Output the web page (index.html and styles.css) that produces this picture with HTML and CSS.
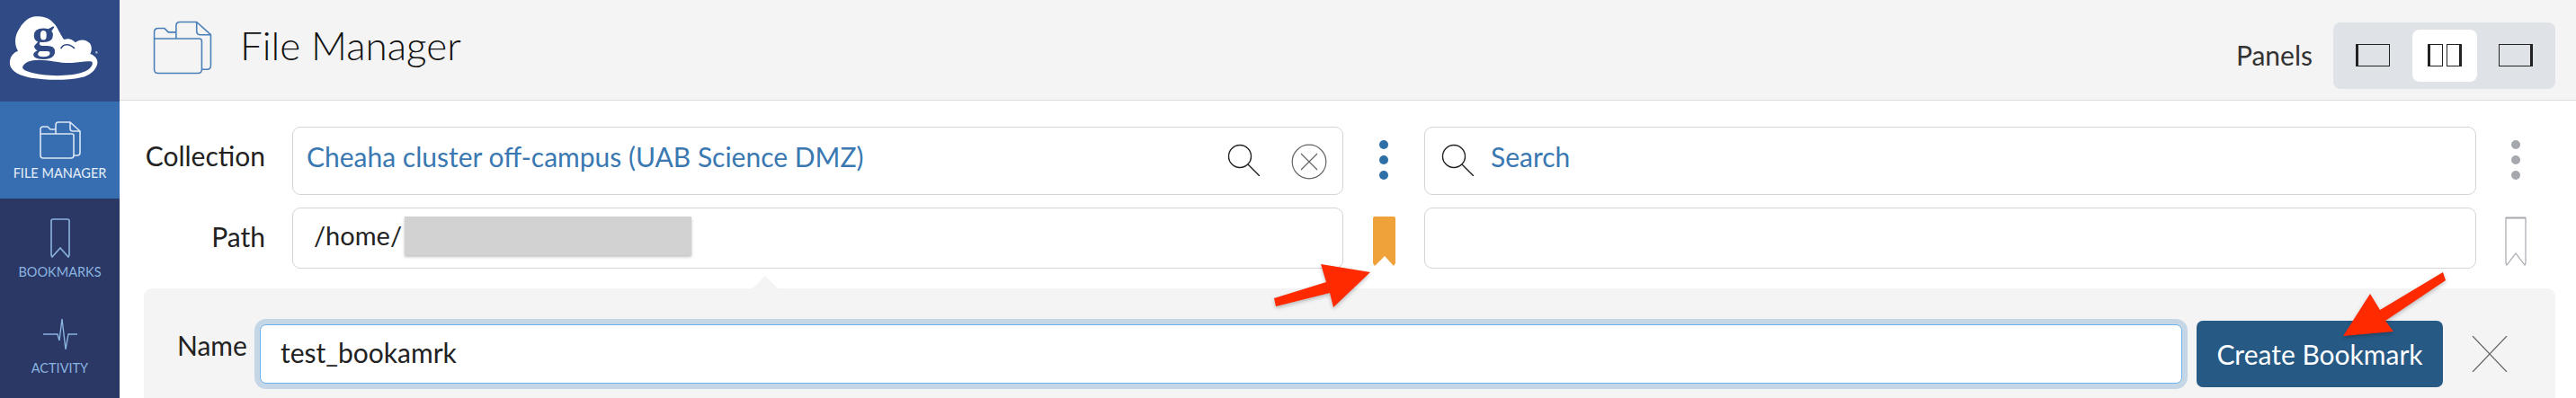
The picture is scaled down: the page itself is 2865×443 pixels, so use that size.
FILE: index.html
```html
<!DOCTYPE html>
<html lang="en">
<head>
    <meta charset="UTF-8">
    <title>File Manager</title>
    <link rel="stylesheet" href="styles.css">
</head>
<body>
    <nav class="sidebar">
        <div class="logo">
            <svg width="115" height="90" viewBox="0 0 345 270">
                <path fill="#fff" d="M18 175C20 155 32 145 45 140C33 120 32 90 50 65C65 40 85 25 105 25C135 22 165 35 182 75C190 88 195 100 200 102C215 95 232 105 236 112C250 100 272 100 285 115C292 125 292 140 286 150C302 155 312 168 310 182C305 205 285 222 255 229C220 237 170 238 130 235C95 232 55 227 32 208C22 198 16 188 18 175Z"/>
                <path fill="#2f4a85" d="M60 195C65 178 85 170 115 170C150 170 190 182 225 180C250 179 275 172 292 176C298 186 285 203 262 211C225 224 165 225 125 219C95 215 62 208 60 195Z"/>
                <path fill="none" stroke="#2f4a85" stroke-width="5" d="M188 132C196 118 214 112 234 132"/>
                <circle cx="307" cy="145" r="4" fill="#9fb0cf"/>
                <text class="logo-g" x="92" y="136">g</text>
            </svg>
        </div>
        <a class="nav-item active" href="#">
            <svg width="46" height="42" viewBox="0 0 46 42" fill="none" stroke="#dbe6f4" stroke-width="1.6">
                <path d="M1 14V9Q1 6 4 6H9L12 9H18"/>
                <path d="M1 14H36Q38 14 38 16V38Q38 41 35 41H4Q1 41 1 38Z"/>
                <path d="M18 14V4Q18 1 21 1H34L45 11V35Q45 38 42 38H38M34 1V8Q34 11 37 11H45"/>
            </svg>
            <span>FILE MANAGER</span>
        </a>
        <a class="nav-item bookmarks" href="#">
            <svg width="22" height="44" viewBox="0 0 22 44" fill="none" stroke="#8ab4e0" stroke-width="1.6">
                <path d="M1 3Q1 1 3 1H19Q21 1 21 3V41L20 43L11 33L2 43L1 41Z"/>
            </svg>
            <span>BOOKMARKS</span>
        </a>
        <a class="nav-item activity" href="#">
            <svg width="38" height="36" viewBox="0 0 38 36" fill="none" stroke="#8ab4e0" stroke-width="1.4">
                <path d="M0 18H16L18 25L21 1L25 35L28 18H38"/>
            </svg>
            <span>ACTIVITY</span>
        </a>
    </nav>

    <main class="main">
        <header class="topbar">
            <svg class="title-icon" width="68" height="60" viewBox="0 0 46 42" fill="none" stroke="#4a7fb8" stroke-width="1.1">
                <path d="M1 14V9Q1 6 4 6H9L12 9H18"/>
                <path d="M1 14H36Q38 14 38 16V38Q38 41 35 41H4Q1 41 1 38Z"/>
                <path d="M18 14V4Q18 1 21 1H34L45 11V35Q45 38 42 38H38M34 1V8Q34 11 37 11H45"/>
            </svg>
            <h1>File Manager</h1>
            <span class="panels-label">Panels</span>
            <div class="panels">
                <div class="panel-btn">
                    <svg width="38" height="25" viewBox="0 0 38 25" fill="none" stroke="#222">
                        <rect x="0.5" y="0.5" width="37" height="24"/>
                        <path stroke-width="3" d="M1.5 0V25"/>
                    </svg>
                </div>
                <div class="panel-btn selected">
                    <svg width="38" height="25" viewBox="0 0 38 25" fill="none" stroke="#222">
                        <rect x="0.5" y="0.5" width="16" height="24"/>
                        <rect x="21.5" y="0.5" width="16" height="24"/>
                        <path stroke-width="3" d="M1.5 0V25M36.5 0V25"/>
                    </svg>
                </div>
                <div class="panel-btn">
                    <svg width="38" height="25" viewBox="0 0 38 25" fill="none" stroke="#222">
                        <rect x="0.5" y="0.5" width="37" height="24"/>
                        <path stroke-width="3" d="M36.5 0V25"/>
                    </svg>
                </div>
            </div>
        </header>

        <section class="fields">
            <label class="field-label">Collection</label>
            <div class="box link">
                <span class="grow">Cheaha cluster off-campus (UAB Science DMZ)</span>
                <svg class="search-icon" width="36" height="36" viewBox="0 0 36 36" fill="none" stroke="#222" stroke-width="1.4">
                    <circle cx="14" cy="14" r="12.5"/>
                    <path d="M23 23L36 36"/>
                </svg>
                <svg class="clear-icon" width="40" height="40" viewBox="0 0 40 40" fill="none" stroke="#666" stroke-width="1.2">
                    <circle cx="20" cy="20" r="18.8"/>
                    <path d="M11 11L29 29M29 11L11 29"/>
                </svg>
            </div>
            <div class="side">
                <div class="dots"><i></i><i></i><i></i></div>
            </div>
            <div class="box link search-box">
                <svg class="search-icon" width="36" height="36" viewBox="0 0 36 36" fill="none" stroke="#222" stroke-width="1.4">
                    <circle cx="14" cy="14" r="12.5"/>
                    <path d="M23 23L36 36"/>
                </svg>
                <span class="grow">Search</span>
            </div>
            <div class="side">
                <div class="dots grey"><i></i><i></i><i></i></div>
            </div>

            <label class="field-label">Path</label>
            <div class="box path-box">
                <span>/home/</span><span class="redacted"></span>
            </div>
            <div class="side">
                <svg width="25" height="55" viewBox="0 0 25 55"><path fill="#f0a23a" d="M0 2Q0 0 2 0H23Q25 0 25 2V52L23 55L13 44L2 55L0 52Z"/></svg>
            </div>
            <div class="box"></div>
            <div class="side">
                <svg width="24" height="55" viewBox="0 0 24 55" fill="#fff" stroke="#a5a8ad" stroke-width="1.2"><path d="M1 1.5H23V52L22 54L12 41L2 54L1 52Z"/><path stroke-width="2" d="M1 1.5H23"/></svg>
            </div>
        </section>

        <section class="bookmark-panel">
            <label class="name-label">Name</label>
            <div class="name-input">test_bookamrk</div>
            <button class="create-btn">Create Bookmark</button>
            <svg class="close-icon" width="40" height="40" viewBox="0 0 40 40" fill="none" stroke="#666" stroke-width="1.2">
                <path d="M1 0L39 40M39 0L1 40"/>
            </svg>
        </section>
    </main>

    <svg class="arrows" width="2865" height="443" viewBox="0 0 2865 443">
        <path fill="#ff2a00" d="M1524 303L1469 294L1475 314L1417 332L1419 341L1479 326L1483 342Z"/>
        <path fill="#ff2a00" d="M2606 374L2662 369L2653 357L2720 312L2717 303L2647 345L2636 327Z"/>
    </svg>
</body>
</html>
```

FILE: styles.css
```css
* {
    box-sizing: border-box;
}

body {
    margin: 0;
    height: 443px;
    overflow: hidden;
    display: flex;
    font-family: Lato, "Open Sans", sans-serif;
    color: #222;
    background-color: #fff;
}

.sidebar {
    width: 133px;
    flex-shrink: 0;
    background-color: #2b3764;
}

.logo {
    height: 113px;
    padding: 10px 0 0 5px;
    background-color: #2f4a85;
}

.logo-g {
    font-family: "Liberation Serif", serif;
    font-weight: bold;
    font-size: 155px;
    fill: #2f4a85;
}

.nav-item {
    height: 108px;
    display: flex;
    flex-direction: column;
    align-items: center;
    padding-top: 22px;
    color: #8ab4e0;
    font-size: 14.5px;
    text-decoration: none;
}

.nav-item span {
    margin-top: 7px;
}

.nav-item.active {
    color: #e6eef8;
    background-color: #376eb2;
}

.nav-item.bookmarks {
    height: 111px;
}

.nav-item.activity span {
    margin-top: 11px;
}

.main {
    flex: 1;
    min-width: 0;
}

.topbar {
    height: 112px;
    display: flex;
    align-items: center;
    padding: 0 23px 0 36px;
    background-color: #f4f4f4;
    border-bottom: 1px solid #dcdcdc;
}

.title-icon {
    margin: 0 30px 6px 0;
}

h1 {
    flex: 1;
    margin: 0 0 12px;
    font-size: 44px;
    font-weight: 300;
    color: #111;
}

.panels-label {
    margin: 10px 23px 0 0;
    font-size: 30px;
    color: #333;
}

.panels {
    width: 247px;
    height: 74px;
    display: flex;
    justify-content: space-between;
    margin-top: 12px;
    padding: 8px;
    background-color: #dfe2e7;
    border-radius: 8px;
}

.panel-btn {
    width: 72px;
    display: flex;
    align-items: center;
    justify-content: center;
    border-radius: 8px;
}

.panel-btn.selected {
    background-color: #fff;
}

.fields {
    display: grid;
    grid-template-columns: 165px 1169px 90px 1170px 88px;
    grid-template-rows: 76px 68px;
    row-gap: 14px;
    padding: 29px 0 0 27px;
}

.field-label {
    padding: 14px 30px 0 0;
    font-size: 30px;
    text-align: right;
}

.box {
    display: flex;
    align-items: flex-start;
    border: 1.5px solid #d3d5d9;
    border-radius: 9px;
    font-size: 30px;
}

.link {
    padding: 14px 17px 0 15px;
    color: #3a78b2;
}

.grow {
    flex: 1;
}

.search-icon {
    margin-top: 4px;
}

.clear-icon {
    margin: 4px 0 0 35px;
}

.search-box .search-icon {
    margin: 4px 19px 0 3px;
}

.path-box {
    padding: 12px 0 0 23px;
    font-size: 29px;
}

.redacted {
    width: 319px;
    height: 43px;
    margin: -3px 0 0 3px;
    background-color: #d2d2d2;
    box-shadow: 0 2px 3px rgba(0, 0, 0, 0.25);
}

.side {
    display: flex;
    justify-content: center;
    padding-top: 10px;
}

.dots {
    display: flex;
    flex-direction: column;
    gap: 7px;
    margin-top: 5px;
}

.dots i {
    width: 10px;
    height: 10px;
    border-radius: 50%;
    background-color: #2f6fa8;
}

.dots.grey i {
    background-color: #a5a8ad;
}

.bookmark-panel {
    position: relative;
    height: 122px;
    display: flex;
    align-items: flex-start;
    margin: 22px 23px 0 27px;
    padding: 36px 0 0 37px;
    background-color: #f4f4f4;
    border-radius: 9px 9px 0 0;
}

.bookmark-panel::before {
    content: "";
    position: absolute;
    left: 677px;
    top: -14px;
    border-left: 14px solid transparent;
    border-right: 14px solid transparent;
    border-bottom: 14px solid #f4f4f4;
}

.name-label {
    width: 92px;
    padding-top: 9px;
    font-size: 30px;
}

.name-input {
    width: 2138px;
    height: 66px;
    margin-top: 4px;
    padding: 12px 0 0 22px;
    font-size: 30px;
    background-color: #fff;
    border: 1.5px solid #6db2ee;
    border-radius: 7px;
    box-shadow: 0 0 0 6px #c5d6e6;
}

.create-btn {
    width: 274px;
    height: 74px;
    margin-left: 16px;
    padding: 0;
    font-family: inherit;
    font-size: 30px;
    color: #fff;
    background-color: #265a85;
    border: none;
    border-radius: 7px;
}

.close-icon {
    margin: 17px 0 0 32px;
}

.arrows {
    position: absolute;
    left: 0;
    top: 0;
    pointer-events: none;
    filter: drop-shadow(0 2px 2px rgba(0, 0, 0, 0.25));
}
```
